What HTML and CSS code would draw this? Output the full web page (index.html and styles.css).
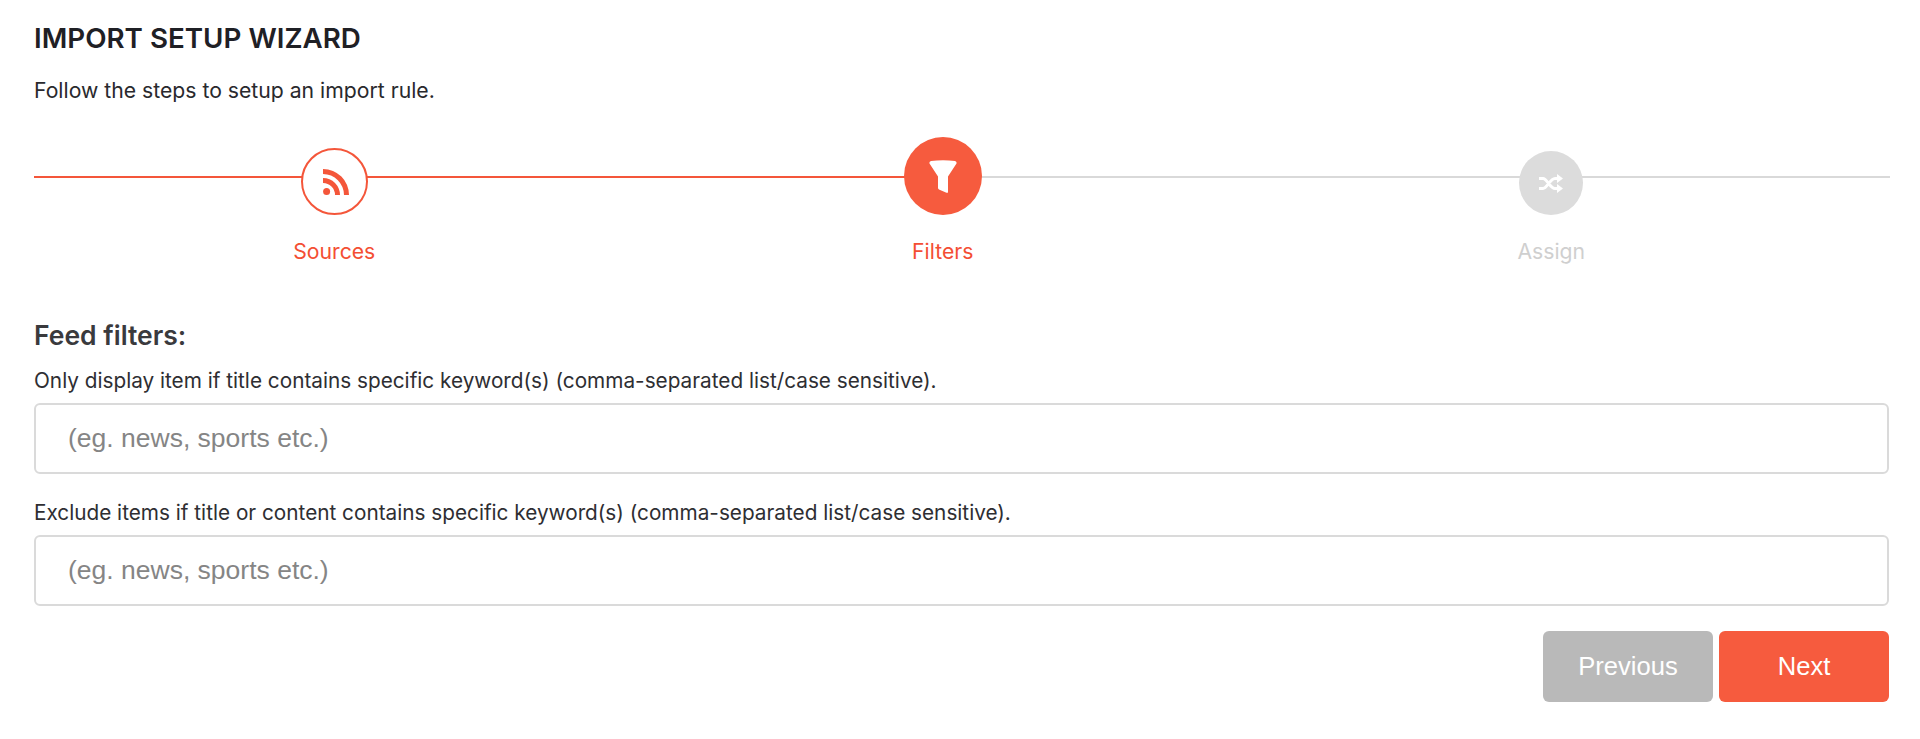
FILE: index.html
```html
<!DOCTYPE html>
<html lang="en">
<head>
<meta charset="utf-8">
<title>Import Setup Wizard</title>
<link rel="stylesheet" href="styles.css">
</head>
<body>
<main class="wizard">
  <h1 class="title">IMPORT SETUP WIZARD</h1>
  <p class="subtitle">Follow the steps to setup an import rule.</p>
  <div class="stepper">
    <div class="line line-done"></div>
    <div class="line line-todo"></div>
    <div class="step step-done">
      <div class="circle circle-done">
        <svg class="icon icon-rss" width="26" height="26" viewBox="0 0 26 26"><path fill="#f4563a" d="M0 0A26 26 0 0 1 26 26H21A21 21 0 0 0 0 5ZM0 9A17 17 0 0 1 17 26H12A12 12 0 0 0 0 14Z"/><circle cx="3.6" cy="22.4" r="3.5" fill="#f4563a"/></svg>
      </div>
      <div class="label">Sources</div>
    </div>
    <div class="step step-active">
      <div class="circle circle-active">
        <svg class="icon" width="28" height="33" viewBox="0 0 28 33"><path fill="#fff" d="M2 1Q14-.5 26 1Q28 1.5 27.5 3.5L19 16.5V32.5Q18.5 33 17.5 32.8L10.5 29.8Q9 29.2 9 28V16.5L.5 3.5Q0 1.5 2 1Z"/></svg>
      </div>
      <div class="label">Filters</div>
    </div>
    <div class="step step-todo">
      <div class="circle circle-todo">
        <svg class="icon" width="24" height="19" viewBox="0 0 24 19"><path fill="none" stroke="#fff" stroke-width="3" d="M0 4.5H4C8 4.5 11 14.5 16 14.5H20M0 14.5H4C8 14.5 11 4.5 16 4.5H20"/><path fill="#fff" d="M18 0L24 4.5L18 9ZM18 10L24 14.5L18 19Z"/></svg>
      </div>
      <div class="label">Assign</div>
    </div>
  </div>
  <h2 class="section">Feed filters:</h2>
  <label class="field-label first" for="inc">Only display item if title contains specific keyword(s) (comma-separated list/case sensitive).</label>
  <input class="field" id="inc" type="text" placeholder="(eg. news, sports etc.)">
  <label class="field-label second" for="exc">Exclude items if title or content contains specific keyword(s) (comma-separated list/case sensitive).</label>
  <input class="field" id="exc" type="text" placeholder="(eg. news, sports etc.)">
  <div class="actions">
    <button class="btn btn-prev" type="button">Previous</button>
    <button class="btn btn-next" type="button">Next</button>
  </div>
</main>
</body>
</html>
```

FILE: styles.css
```css
* { box-sizing: border-box; }
html, body { margin: 0; background: #fff; }
body { height: 739px; overflow: hidden; font-family: Inter, "Noto Sans", sans-serif; color: #2b2b2f; }
.wizard { padding: 24px 31px 0 34px; display: flex; flex-direction: column; }
.title { margin: 0; font-size: 27.75px; line-height: 28px; font-weight: 600; color: #1f2025; }
.subtitle { margin: 24px 0 0; font-size: 21.2px; line-height: 28px; color: #29292d; }
.stepper { position: relative; margin-top: 33px; margin-left: -4px; display: grid; grid-template-columns: repeat(3, 608.5px); align-items: end; height: 162px; align-content: start; }
.line { position: absolute; top: 39px; height: 2px; }
.line-done { left: 4px; width: 909px; background: #f4563a; }
.line-todo { left: 913px; right: -1px; background: #d9d9d9; }
.step { position: relative; display: flex; flex-direction: column; align-items: center; }
.circle { display: flex; align-items: center; justify-content: center; border-radius: 50%; }
.circle-done { width: 67px; height: 67px; background: #fff; border: 2px solid #f4563a; }
.circle-active { width: 78px; height: 78px; background: #f65b3e; }
.circle-todo { width: 64px; height: 64px; background: #dcdcdc; margin-bottom: 1px; }
.label { margin-top: 22px; font-size: 21.2px; line-height: 28px; color: #f44e33; }
.step-todo .label { color: #cfcfcf; margin-top: 21px; }
.icon { display: block; }
.icon-rss { margin: 1px 0 0 3px; }
.section { margin: 21px 0 0; font-size: 26.5px; line-height: 30px; font-weight: 600; color: #3a3a3d; }
.field-label { display: block; font-size: 20.75px; line-height: 28px; color: #2e2e32; }
.first { margin-top: 17px; }
.second { margin-top: 25px; }
.field { display: block; width: 100%; height: 71px; margin-top: 8px; padding: 0 32px; border: 2px solid #dadada; border-radius: 6px; background: #fff; font-family: "Liberation Sans", Arial, sans-serif; font-size: 26.5px; color: #333; outline: none; }
.field::placeholder { color: #858585; opacity: 1; }
.actions { display: flex; justify-content: flex-end; gap: 6px; margin-top: 25px; }
.btn { width: 170px; height: 71px; border: 0; border-radius: 6px; color: #fff; font-family: "Liberation Sans", Arial, sans-serif; font-size: 25.6px; padding: 0; }
.btn-prev { background: #b9b9b9; }
.btn-next { background: #f65b3e; }
```
